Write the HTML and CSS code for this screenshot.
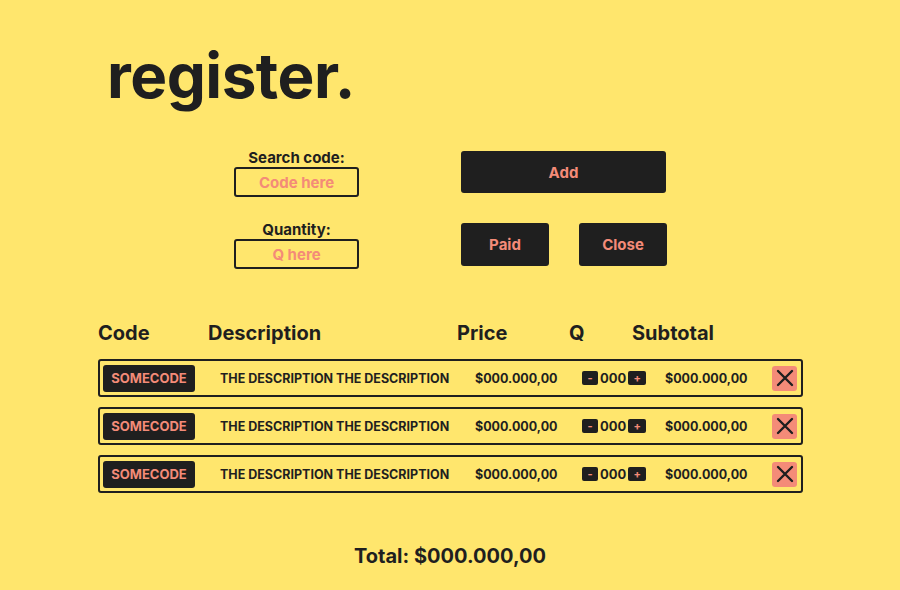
FILE: index.html
```html
<!DOCTYPE html>
<html>
<head>
<meta charset="utf-8">
<link rel="stylesheet" href="styles.css">
</head>
<body>
<div class="page">
  <h1 class="title">register.</h1>
  <div class="form">
    <div class="fields">
      <div class="field">
        <label class="label">Search code:</label>
        <div class="input">Code here</div>
      </div>
      <div class="field">
        <label class="label">Quantity:</label>
        <div class="input">Q here</div>
      </div>
    </div>
    <div class="actions">
      <button class="btn btn-add">Add</button>
      <div class="btn-row">
        <button class="btn btn-small">Paid</button>
        <button class="btn btn-small">Close</button>
      </div>
    </div>
  </div>
  <div class="table">
    <div class="thead">
      <span>Code</span><span>Description</span><span>Price</span><span>Q</span><span>Subtotal</span>
    </div>
    <div class="row">
      <span class="code">SOMECODE</span>
      <span class="desc">THE DESCRIPTION THE DESCRIPTION</span>
      <span class="price">$000.000,00</span>
      <span class="qty"><span class="qbtn qminus">-</span><span class="qval">000</span><span class="qbtn qplus">+</span></span>
      <span class="sub">$000.000,00</span>
      <span class="del"><svg width="18" height="18" viewBox="0 0 18 18"><path d="M2 2 L16 16 M16 2 L2 16" stroke="#1f1f1f" stroke-width="2.4" stroke-linecap="round"/></svg></span>
    </div>
    <div class="row">
      <span class="code">SOMECODE</span>
      <span class="desc">THE DESCRIPTION THE DESCRIPTION</span>
      <span class="price">$000.000,00</span>
      <span class="qty"><span class="qbtn qminus">-</span><span class="qval">000</span><span class="qbtn qplus">+</span></span>
      <span class="sub">$000.000,00</span>
      <span class="del"><svg width="18" height="18" viewBox="0 0 18 18"><path d="M2 2 L16 16 M16 2 L2 16" stroke="#1f1f1f" stroke-width="2.4" stroke-linecap="round"/></svg></span>
    </div>
    <div class="row">
      <span class="code">SOMECODE</span>
      <span class="desc">THE DESCRIPTION THE DESCRIPTION</span>
      <span class="price">$000.000,00</span>
      <span class="qty"><span class="qbtn qminus">-</span><span class="qval">000</span><span class="qbtn qplus">+</span></span>
      <span class="sub">$000.000,00</span>
      <span class="del"><svg width="18" height="18" viewBox="0 0 18 18"><path d="M2 2 L16 16 M16 2 L2 16" stroke="#1f1f1f" stroke-width="2.4" stroke-linecap="round"/></svg></span>
    </div>
  </div>
  <div class="total">Total: $000.000,00</div>
</div>
</body>
</html>
```

FILE: styles.css
```css
* { box-sizing: border-box; }
html, body { margin: 0; padding: 0; }
body {
  background: #ffe66d;
  font-family: Inter, "Noto Sans", sans-serif;
  color: #1f1f1f;
  width: 900px;
  height: 590px;
  overflow: hidden;
}
.page { padding-top: 45px; }
.title {
  margin: 0 0 0 107px;
  font-size: 62px;
  line-height: 62px;
  font-weight: 700;
  letter-spacing: -0.5px;
}
.form {
  display: flex;
  margin: 43px 0 0 234px;
  gap: 102px;
}
.fields { display: flex; flex-direction: column; gap: 24px; width: 125px; margin-top: -1px; }
.field { display: flex; flex-direction: column; align-items: center; }
.label {
  font-size: 15px;
  font-weight: 700;
  line-height: 18px;
}
.input {
  width: 125px;
  height: 30px;
  border: 2px solid #1f1f1f;
  border-radius: 3px;
  color: #f48b78;
  font-size: 15px;
  font-weight: 700;
  display: flex;
  align-items: center;
  justify-content: center;
}
.actions { display: flex; flex-direction: column; gap: 30px; padding-top: 1px; }
.btn {
  background: #1f1f1f;
  color: #f48b78;
  border: none;
  border-radius: 3px;
  font-family: Inter, sans-serif;
  font-size: 15px;
  font-weight: 700;
  height: 43px;
  padding: 0;
}
.btn-add { width: 205px; height: 42px; }
.btn-row { display: flex; gap: 30px; }
.btn-small { width: 88px; }
.table { margin: 52px 0 0 98px; width: 705px; }
.thead {
  display: grid;
  grid-template-columns: 110px 249px 112px 63px auto;
  font-size: 20px;
  font-weight: 700;
  line-height: 24px;
  margin-bottom: 14px;
}
.row {
  display: flex;
  align-items: center;
  height: 38px;
  border: 2px solid #1f1f1f;
  border-radius: 3px;
  padding: 0 4px 0 3px;
  margin-bottom: 10px;
  font-size: 12.5px;
  font-weight: 700;
}
.code {
  width: 92px;
  height: 27px;
  background: #1f1f1f;
  color: #f48b78;
  border-radius: 3px;
  display: flex;
  align-items: center;
  justify-content: center;
  font-size: 13px;
}
.desc { margin-left: 25px; width: 255px; font-size: 12.5px; }
.price { width: 107px; }
.qty { width: 83px; display: flex; align-items: center; }
.qbtn {
  background: #1f1f1f;
  color: #f48b78;
  border-radius: 2px;
  height: 14px;
  display: flex;
  align-items: center;
  justify-content: center;
  font-size: 11px;
  line-height: 14px;
}
.qminus { width: 16px; }
.qplus { width: 18px; }
.qval { margin: 0 2px 0 2px; font-size: 13px; }
.sub { width: 107px; }
.del {
  width: 25px;
  height: 25px;
  background: #f48b78;
  border-radius: 3px;
  display: flex;
  align-items: center;
  justify-content: center;
}
.total {
  margin-top: 51px;
  text-align: center;
  font-size: 20px;
  font-weight: 700;
  line-height: 24px;
}
```
